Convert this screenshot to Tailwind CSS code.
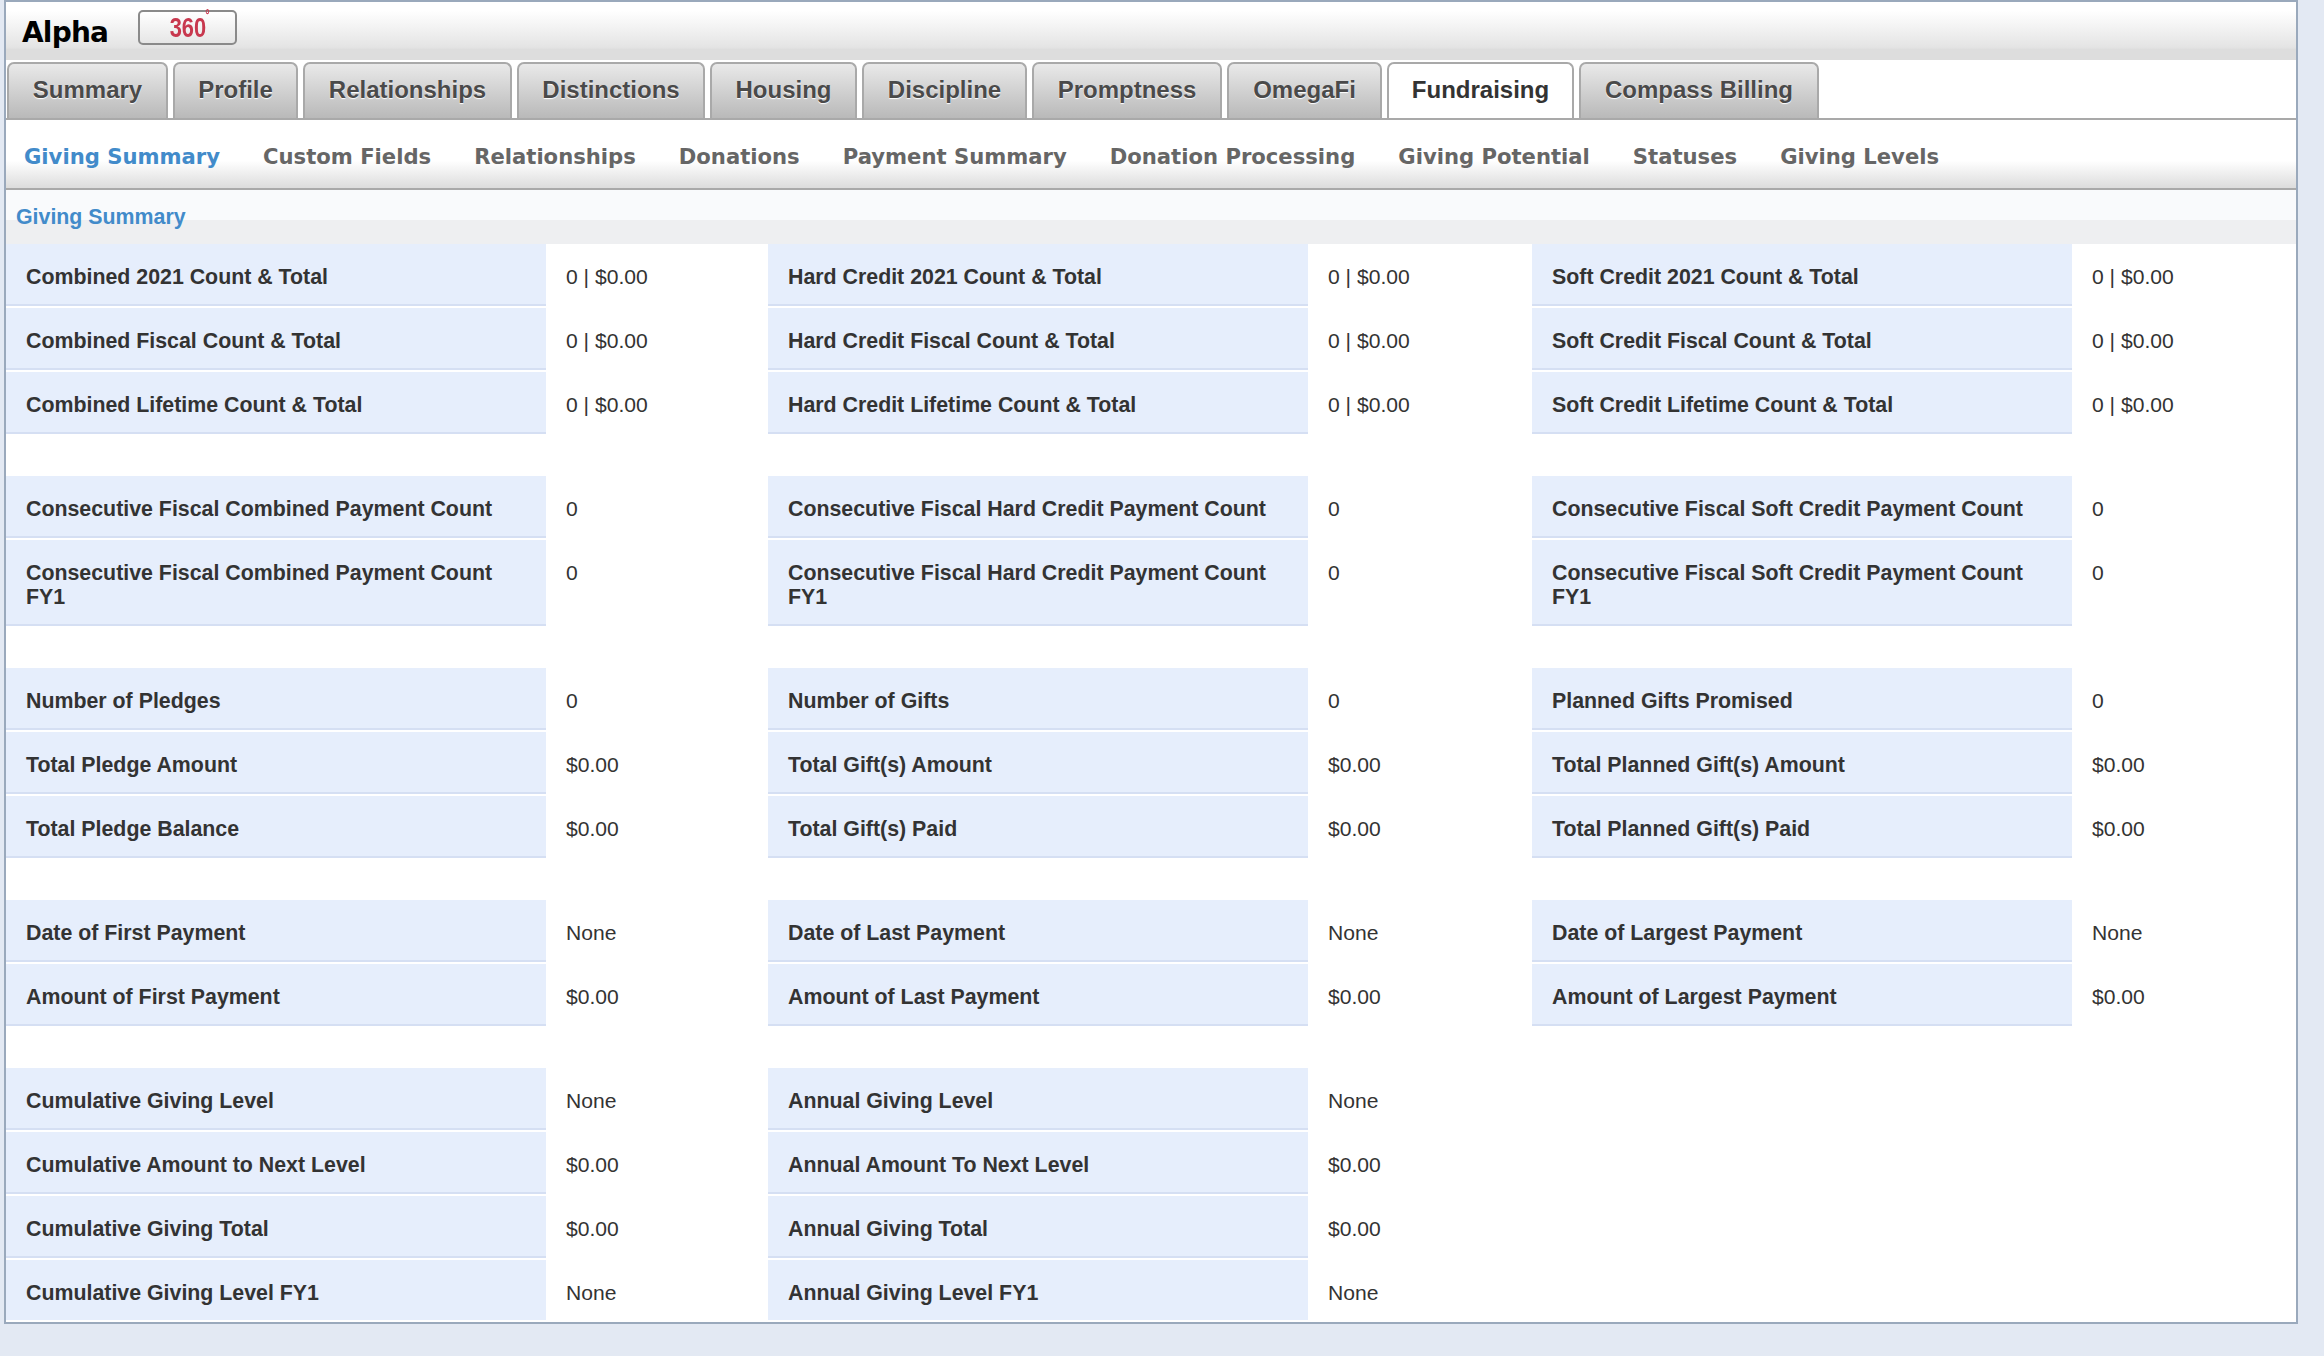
<!DOCTYPE html>
<html lang="en">

<head>
    <meta charset="UTF-8">
    <script src="https://cdn.jsdelivr.net/npm/@tailwindcss/browser@4"></script>
    <title>Giving Summary</title>
</head>

<body class="bg-[#e3e9f3] h-[1356px] overflow-hidden font-['Liberation_Sans',sans-serif]">
    <div class="ml-[4px] w-[2294px] h-[1324px] bg-white border-x-2 border-y-2 border-[#9aa9bc]">
        <!-- Header -->
        <div class="h-[58px] flex items-center bg-[linear-gradient(#fff_0%,#fff_15%,#e4e4e4_78%,#dddddd_82%,#dddddd_100%)]">
            <span class="ml-[16px] w-[116px] text-[28px] font-bold text-black font-['DejaVu_Sans',sans-serif] tracking-[-0.8px] pt-[4px]">Alpha</span>
            <div class="w-[99px] h-[35px] -mt-[7px] pl-[4px] flex items-center justify-center rounded-[5px] border-2 border-[#8a8a8a] bg-[linear-gradient(#fff,#e6e6e6)]">
                <span class="text-[28px] leading-none font-bold text-[#c8384e] scale-x-[.78] blur-[0.5px]">360<sup class="text-[14px] align-[10px] ml-[-1px]">°</sup></span>
            </div>
        </div>

        <!-- Main tabs -->
        <div class="h-[60px] pt-[2px] pl-[1px] flex gap-[5px] border-b-2 border-[#a9a9a9] text-[24px] font-bold text-[#4a4a4a] [&>a]:h-[56px] [&>a]:pb-[2px] [&>a]:flex [&>a]:items-center [&>a]:justify-center [&>a]:rounded-t-[7px] [&>a]:border-2 [&>a]:border-b-0 [&>a]:border-[#a9a9a9] [&>a]:[text-shadow:0_1px_1px_#fff]">
            <a class="w-[161px] bg-[linear-gradient(#e9e9e9,#b9b9b9)]">Summary</a>
            <a class="w-[125px] bg-[linear-gradient(#e9e9e9,#b9b9b9)]">Profile</a>
            <a class="w-[209px] bg-[linear-gradient(#e9e9e9,#b9b9b9)]">Relationships</a>
            <a class="w-[188px] bg-[linear-gradient(#e9e9e9,#b9b9b9)]">Distinctions</a>
            <a class="w-[147px] bg-[linear-gradient(#e9e9e9,#b9b9b9)]">Housing</a>
            <a class="w-[165px] bg-[linear-gradient(#e9e9e9,#b9b9b9)]">Discipline</a>
            <a class="w-[190px] bg-[linear-gradient(#e9e9e9,#b9b9b9)]">Promptness</a>
            <a class="w-[155px] bg-[linear-gradient(#e9e9e9,#b9b9b9)]">OmegaFi</a>
            <a class="w-[187px] bg-white text-[#333]">Fundraising</a>
            <a class="w-[240px] bg-[linear-gradient(#e9e9e9,#b9b9b9)]">Compass Billing</a>
        </div>

        <!-- Sub navigation -->
        <div class="h-[70px] pl-[18px] pt-[5px] flex items-center gap-[43px] border-b-2 border-[#a9a9a9] bg-[linear-gradient(#fff_0%,#fff_60%,#dcdcdc_100%)] text-[21.15px] font-bold text-[#666] font-['DejaVu_Sans',sans-serif] [&>a]:whitespace-nowrap">
            <a class="text-[#428bca]">Giving Summary</a>
            <a>Custom Fields</a>
            <a>Relationships</a>
            <a>Donations</a>
            <a>Payment Summary</a>
            <a>Donation Processing</a>
            <a>Giving Potential</a>
            <a>Statuses</a>
            <a>Giving Levels</a>
        </div>

        <!-- Section title -->
        <div class="h-[54px] pl-[10px] pt-[1px] flex items-center text-[21.35px] font-bold text-[#428bca] bg-[linear-gradient(#f9fafc_0%,#f9fafc_56%,#eeeff1_56%,#eeeff1_100%)]">Giving Summary</div>

        <!-- Grid of values -->
        <div class="grid grid-cols-[540px_222px_540px_224px_540px_1fr] gap-y-[2px] leading-[24px] text-[#333] [&>b]:text-[21.35px] [&>b]:bg-[#e6eefc] [&>b]:border-b-2 [&>b]:border-[#d5dff3] [&>b]:min-h-[62px] [&>b]:pt-[21px] [&>b]:px-[20px] [&>span]:text-[21.1px] [&>span]:pt-[21px] [&>span]:pl-[20px]">
            <b>Combined 2021 Count &amp; Total</b><span>0 | $0.00</span><b>Hard Credit 2021 Count &amp; Total</b><span>0 | $0.00</span><b>Soft Credit 2021 Count &amp; Total</b><span>0 | $0.00</span>
            <b>Combined Fiscal Count &amp; Total</b><span>0 | $0.00</span><b>Hard Credit Fiscal Count &amp; Total</b><span>0 | $0.00</span><b>Soft Credit Fiscal Count &amp; Total</b><span>0 | $0.00</span>
            <b>Combined Lifetime Count &amp; Total</b><span>0 | $0.00</span><b>Hard Credit Lifetime Count &amp; Total</b><span>0 | $0.00</span><b>Soft Credit Lifetime Count &amp; Total</b><span>0 | $0.00</span>
            <i class="col-span-6 h-[38px]"></i>
            <b>Consecutive Fiscal Combined Payment Count</b><span>0</span><b>Consecutive Fiscal Hard Credit Payment Count</b><span>0</span><b>Consecutive Fiscal Soft Credit Payment Count</b><span>0</span>
            <b class="h-[86px]">Consecutive Fiscal Combined Payment Count FY1</b><span>0</span><b>Consecutive Fiscal Hard Credit Payment Count FY1</b><span>0</span><b>Consecutive Fiscal Soft Credit Payment Count FY1</b><span>0</span>
            <i class="col-span-6 h-[38px]"></i>
            <b>Number of Pledges</b><span>0</span><b>Number of Gifts</b><span>0</span><b>Planned Gifts Promised</b><span>0</span>
            <b>Total Pledge Amount</b><span>$0.00</span><b>Total Gift(s) Amount</b><span>$0.00</span><b>Total Planned Gift(s) Amount</b><span>$0.00</span>
            <b>Total Pledge Balance</b><span>$0.00</span><b>Total Gift(s) Paid</b><span>$0.00</span><b>Total Planned Gift(s) Paid</b><span>$0.00</span>
            <i class="col-span-6 h-[38px]"></i>
            <b>Date of First Payment</b><span>None</span><b>Date of Last Payment</b><span>None</span><b>Date of Largest Payment</b><span>None</span>
            <b>Amount of First Payment</b><span>$0.00</span><b>Amount of Last Payment</b><span>$0.00</span><b>Amount of Largest Payment</b><span>$0.00</span>
            <i class="col-span-6 h-[38px]"></i>
            <b>Cumulative Giving Level</b><span>None</span><b>Annual Giving Level</b><span>None</span><i class="col-span-2"></i>
            <b>Cumulative Amount to Next Level</b><span>$0.00</span><b>Annual Amount To Next Level</b><span>$0.00</span><i class="col-span-2"></i>
            <b>Cumulative Giving Total</b><span>$0.00</span><b>Annual Giving Total</b><span>$0.00</span><i class="col-span-2"></i>
            <b class="border-b-0! min-h-[60px]!">Cumulative Giving Level FY1</b><span>None</span><b class="border-b-0! min-h-[60px]!">Annual Giving Level FY1</b><span>None</span><i class="col-span-2"></i>
        </div>
    </div>
</body>

</html>
